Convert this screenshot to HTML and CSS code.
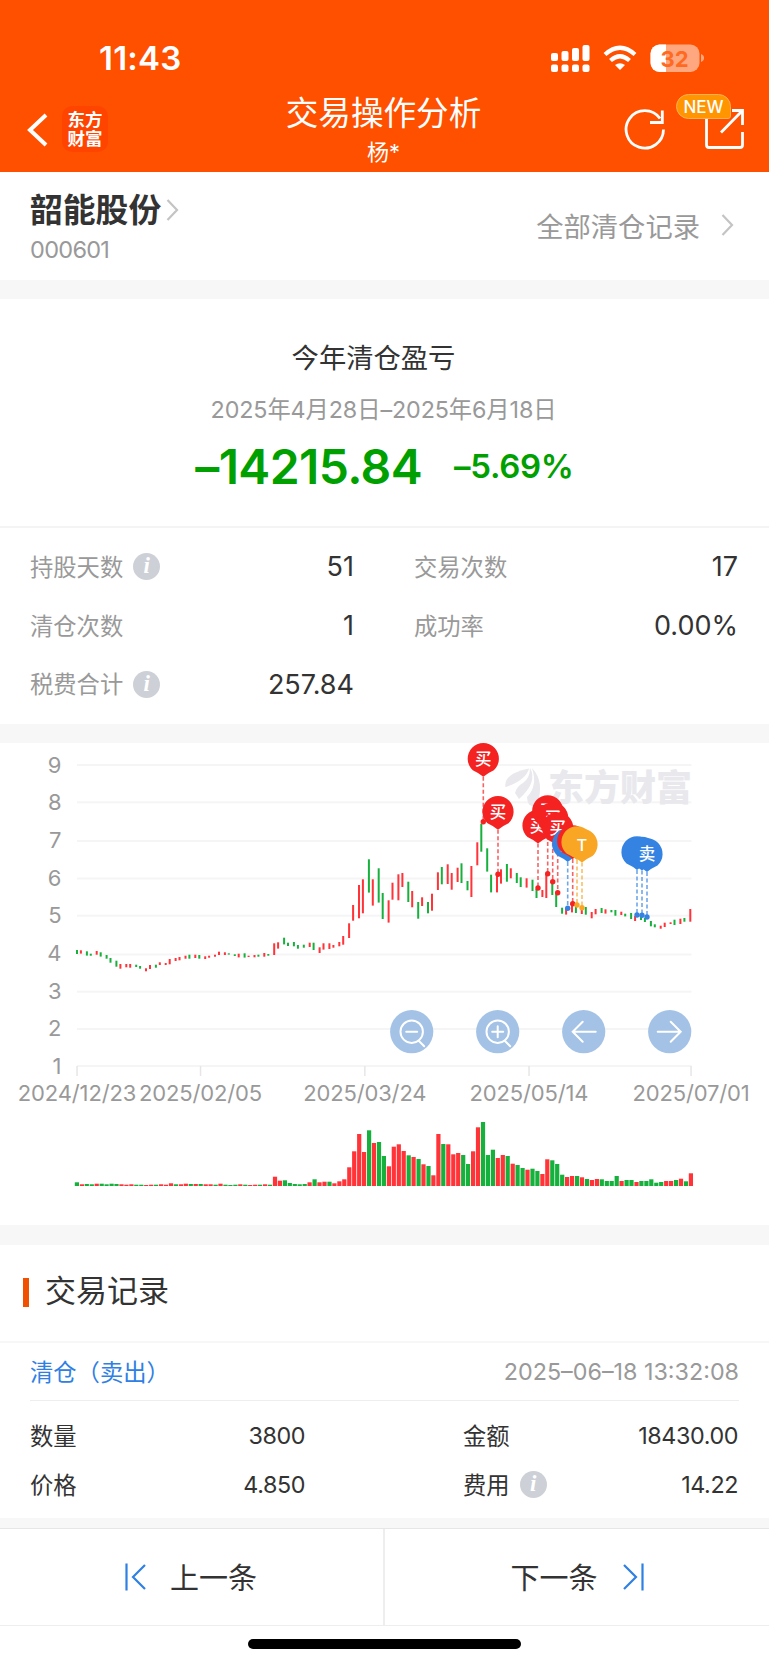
FILE: index.html
```html
<!DOCTYPE html>
<html lang="zh-CN">
<head>
  <meta charset="utf-8">
  <title>交易操作分析</title>
  <link rel="stylesheet" href="styles.css">
</head>
<body>
  <header class="header">
    <div class="status">
      <span class="time">11:43</span>
      <svg class="status-icons" width="156" height="30" viewBox="0 0 156 30">
        <g fill="#fff">
          <rect x="1" y="10" width="7" height="8" rx="2"/>
          <rect x="11.500" y="8" width="7" height="10" rx="2"/>
          <rect x="22" y="5" width="7" height="13" rx="2"/>
          <rect x="32.500" y="2" width="7" height="16" rx="2"/>
          <rect x="1" y="21.500" width="7" height="7.500" rx="2"/>
          <rect x="11.500" y="21.500" width="7" height="7.500" rx="2"/>
          <rect x="22" y="21.500" width="7" height="7.500" rx="2"/>
          <rect x="32.500" y="21.500" width="7" height="7.500" rx="2"/>
          <path d="M70 27 L65 22 Q70 18.500 75 22 Z"/>
        </g>
        <g fill="none" stroke="#fff" stroke-width="4.200">
          <path d="M55 11.500 Q70 -2 85 11.500"/>
          <path d="M60.500 17.500 Q70 9 79.500 17.500"/>
        </g>
        <rect x="100.500" y="1.500" width="49" height="27.500" rx="9" fill="#ffa880"/>
        <path d="M116 1.500 h-6.500 a9 9 0 0 0 -9 9 v9.500 a9 9 0 0 0 9 9 h6.500 Z" fill="#fff"/>
        <path d="M151 11 q3 1.200 3 4 t-3 4 Z" fill="#ffa880"/>
        <text class="battery" x="124.500" y="23.500">32</text>
      </svg>
    </div>
    <div class="nav">
      <div class="nav-side">
        <svg class="back" width="24" height="40" viewBox="0 0 24 40"><path d="M21 5 L5 20 L21 35" fill="none" stroke="#fff" stroke-width="4"/></svg>
        <div class="logo">东方<br>财富</div>
      </div>
      <div class="nav-title">
        <h1>交易操作分析</h1>
        <p>杨*</p>
      </div>
      <div class="nav-side right">
        <svg width="44" height="44" viewBox="0 0 44 44" fill="none" stroke="#fff" stroke-width="2.800">
          <path d="M40.500 22.500 A18.700 18.700 0 1 1 37 11.500"/>
          <path d="M39.300 3.500 V15.500 H27"/>
        </svg>
        <div class="share">
          <svg width="44" height="44" viewBox="0 0 44 44" fill="none" stroke="#fff" stroke-width="2.800">
            <path d="M3.500 12 V38 Q3.500 40.500 6 40.500 H37 Q39.500 40.500 39.500 38 V25"/>
            <path d="M29 3.500 H39.500 V18 M39.500 3.500 L18 25.500"/>
          </svg>
          <span class="badge">NEW</span>
        </div>
      </div>
    </div>
  </header>

  <section class="stock">
    <div>
      <div class="stock-name">韶能股份<svg width="13" height="24" viewBox="0 0 13 24"><path d="M1.500 2 L11 12 L1.500 22" fill="none" stroke="#c4c4c4" stroke-width="2.200"/></svg></div>
      <div class="stock-code">000601</div>
    </div>
    <div class="all-records">全部清仓记录<svg width="13" height="24" viewBox="0 0 13 24"><path d="M1.500 2 L11 12 L1.500 22" fill="none" stroke="#c4c4c4" stroke-width="2.200"/></svg></div>
  </section>

  <section class="summary">
    <h2>今年清仓盈亏</h2>
    <p class="period">2025年4月28日–2025年6月18日</p>
    <div class="profit"><span class="amount">–14215.84</span><span class="percent">–5.69%</span></div>
  </section>

  <section class="stats">
    <div class="stat"><span>持股天数<i class="info">i</i></span><b>51</b></div>
    <div class="stat"><span>交易次数</span><b>17</b></div>
    <div class="stat"><span>清仓次数</span><b>1</b></div>
    <div class="stat"><span>成功率</span><b>0.00%</b></div>
    <div class="stat"><span>税费合计<i class="info">i</i></span><b>257.84</b></div>
  </section>

  <section class="chart">
    <svg id="chart" width="769" height="482" viewBox="0 743 769 482"></svg>
  </section>

  <section class="records">
    <h3>交易记录</h3>
    <div class="record-head"><span>清仓（卖出）</span><time>2025–06–18 13:32:08</time></div>
    <div class="record-body">
      <div class="cell"><span>数量</span><b>3800</b></div>
      <div class="cell"><span>金额</span><b>18430.00</b></div>
      <div class="cell"><span>价格</span><b>4.850</b></div>
      <div class="cell"><span>费用<i class="info">i</i></span><b>14.22</b></div>
    </div>
  </section>

  <footer class="pager">
    <div class="page-btn prev">
      <svg width="22" height="28" viewBox="0 0 22 28" fill="none" stroke="#2f80e4" stroke-width="2.200"><path d="M1.500 0.500 V27.500 M20 2 L8 14 L20 26"/></svg>
      <span>上一条</span>
    </div>
    <div class="page-btn next">
      <span>下一条</span>
      <svg width="22" height="28" viewBox="0 0 22 28" fill="none" stroke="#2f80e4" stroke-width="2.200"><path d="M20.500 0.500 V27.500 M2 2 L14 14 L2 26"/></svg>
    </div>
  </footer>
  <div class="home"></div>
  <script src="chart.js"></script>
</body>
</html>
```
FILE: styles.css
```css
* {
  box-sizing: border-box;
}
body {
  margin: 0;
  width: 769px;
  height: 1665px;
  overflow: hidden;
  background: #fff;
  color: #333;
  font-family: Inter, "Noto Sans CJK SC", sans-serif;
  font-size: 23.3px;
}
h1, h2, h3, p {
  margin: 0;
  font-weight: 400;
}
b {
  font-weight: 400;
}
svg {
  display: block;
  flex: none;
}

/* header */
.header {
  height: 172px;
  background: #ff5000;
  color: #fff;
}
.status {
  height: 86px;
  padding: 29px 63px 0 99px;
  display: flex;
  justify-content: space-between;
  align-items: center;
}
.time {
  font-size: 33px;
  font-weight: 600;
  letter-spacing: 0.2px;
}
.battery {
  font-size: 22px;
  font-weight: 700;
  fill: #ff6a22;
  text-anchor: middle;
}
.nav {
  height: 86px;
  display: flex;
  justify-content: space-between;
}
.nav-side {
  width: 200px;
  padding: 20px 0 0 25px;
  display: flex;
  align-items: flex-start;
}
.nav-side.right {
  padding: 21px 22px 0 0;
  justify-content: flex-end;
  gap: 36px;
}
.back {
  margin-top: 4px;
}
.logo {
  width: 46px;
  height: 46px;
  margin-left: 13px;
  padding-top: 3px;
  border-radius: 10px;
  background: #ff4400;
  font-family: "Noto Sans CJK SC", sans-serif;
  font-size: 17.5px;
  font-weight: 700;
  line-height: 19px;
  text-align: center;
}
.nav-title {
  margin-right: 2px;
  text-align: center;
}
.nav-title h1 {
  font-size: 32.6px;
  line-height: 40px;
  margin-top: 7px;
}
.nav-title p {
  font-size: 22px;
  line-height: 30px;
  margin-top: 4px;
}
.share {
  position: relative;
}
.badge {
  position: absolute;
  left: -27px;
  top: -13px;
  width: 55px;
  height: 25px;
  border: 1px solid #ffb056;
  border-radius: 13px 13px 3px 13px;
  background: #ff9500;
  font-size: 17px;
  font-weight: 500;
  line-height: 24px;
  text-align: center;
}

/* stock name */
.stock {
  height: 127px;
  padding: 16px 35px 0 30px;
  border-bottom: 19px solid #f7f7f7;
  display: flex;
  justify-content: space-between;
}
.stock-name {
  display: flex;
  align-items: center;
  gap: 5px;
  font-size: 32.8px;
  font-weight: 600;
  line-height: 44px;
}
.stock-code {
  font-size: 23.5px;
  line-height: 36px;
  letter-spacing: -0.7px;
  color: #999;
}
.all-records {
  height: 74px;
  display: flex;
  align-items: center;
  gap: 21px;
  font-size: 27.3px;
  color: #999;
}

/* summary */
.summary {
  height: 229px;
  padding-top: 40px;
  border-bottom: 2px solid #f4f4f4;
  text-align: center;
}
.summary h2 {
  font-size: 27.3px;
  line-height: 40px;
  margin-left: -22px;
}
.period {
  margin: 14px 2px 0 0;
  line-height: 34px;
  letter-spacing: -0.1px;
  color: #999;
}
.profit {
  height: 70px;
  padding-top: 8px;
  display: flex;
  justify-content: center;
  align-items: center;
  gap: 32px;
  color: #00a000;
}
.amount {
  font-size: 48px;
  font-weight: 600;
  letter-spacing: -0.6px;
}
.percent {
  font-size: 33px;
  font-weight: 600;
  letter-spacing: -0.3px;
}

/* stats */
.stats {
  height: 215px;
  padding: 9.5px 31px 0 30px;
  border-bottom: 19px solid #f7f7f7;
  display: grid;
  grid-template-columns: 324px 324px;
  grid-auto-rows: 58.7px;
  column-gap: 60px;
}
.stat {
  display: flex;
  justify-content: space-between;
  align-items: center;
}
.stat span, .cell span {
  display: flex;
  align-items: center;
  margin-top: -2px;
}
.stat span {
  color: #999;
}
.stat b {
  font-size: 27px;
}
.info {
  width: 27px;
  height: 27px;
  margin: 2px 0 0 10px;
  border-radius: 50%;
  background: #cdd0d6;
  color: #fff;
  font: italic bold 23px/26px "Liberation Serif", serif;
  text-align: center;
}

/* chart */
.chart {
  height: 502px;
  border-bottom: 20px solid #f7f7f7;
}
.axis {
  font-size: 22px;
  fill: #999;
}
.dates {
  letter-spacing: -0.15px;
  text-anchor: middle;
}
.watermark {
  font-family: "Noto Sans CJK SC", sans-serif;
  font-size: 36px;
  font-weight: 900;
  fill: #e8e8ed;
}
.pin-text {
  font-size: 16.5px;
  font-weight: 500;
  fill: #fff;
  text-anchor: middle;
}

/* records */
.records {
  height: 283px;
  border-bottom: 10px solid #f7f7f7;
}
.records h3 {
  height: 98px;
  padding: 0 0 4px 23px;
  border-bottom: 2px solid #f7f7f7;
  display: flex;
  align-items: center;
  font-size: 31px;
  line-height: 40px;
}
.records h3::before {
  content: "";
  width: 6px;
  height: 29px;
  margin: 2px 16px 0 0;
  background: #f05000;
}
.record-head {
  height: 58px;
  margin: 0 30px;
  border-bottom: 1px solid #eee;
  display: flex;
  justify-content: space-between;
  align-items: center;
  color: #2f80e4;
}
.record-head span {
  margin-top: -2px;
}
.record-head time {
  color: #999;
}
.record-body {
  padding: 10px 31px 0 30px;
  display: grid;
  grid-template-columns: 275px 275px;
  grid-auto-rows: 49px;
  column-gap: 158px;
}
.cell {
  display: flex;
  justify-content: space-between;
  align-items: center;
}
.cell b {
  letter-spacing: -0.4px;
}

/* bottom buttons */
.pager {
  height: 98px;
  border-top: 1px solid #e6e6e6;
  border-bottom: 1px solid #eee;
  display: flex;
}
.page-btn {
  width: 385px;
  display: flex;
  align-items: center;
  font-size: 29px;
}
.page-btn span {
  margin-top: -3px;
}
.prev {
  padding-left: 125px;
  gap: 23px;
  border-right: 2px solid #eee;
}
.next {
  padding-left: 126px;
  gap: 24px;
}
.home {
  width: 273px;
  height: 10px;
  margin: 13px 0 0 248px;
  border-radius: 5px;
  background: #000;
}
```
FILE: chart.js
```js
// heights are kept in thirds of a pixel
var TOP = 735;
var RED = '#ff3338', GREEN = '#16b13c';
var svg = document.getElementById('chart');
var out = '';

// colour, high, low
var candles = 'g645-657 r646-656 g649-662 g656-662 r648-659 g652-665 g660-671 g669-683 g677-695 r687-701 r687-697 r687-698 g689-696 g693-701 r700-709 r690-702 g689-698 r682-690 r684-690 r672-688 r669-678 r666-676 r662-671 g659-671 r659-669 g660-671 r664-672 r662-668 r659-665 r650-660 r652-660 g655-659 g658-663 r656-667 g655-668 r662-666 r660-667 g659-665 r654-665 g657-662 r625-660 r622-641 g608-628 g623-633 g621-634 g630-641 g629-638 r623-636 g623-645 r637-654 r625-644 r625-642 r630-638 r621-634 r603-629 r565-609 r510-557 r450-550 r433-535 g373-473 r433-512 g400-503 g474-552 r496-563 r443-494 r418-496 r414-456 g440-501 r468-517 g501-551 r487-513 g501-535 r476-527 r412-465 g396-448 r388-447 r414-464 r398-441 g385-444 g438-466 r393-486 r322-391 g266-350 g340-410 g419-472 r419-472 r403-446 g387-440 r400-430 g414-444 g427-456 r430-458 g434-468 g462-489 r465-486 r418-489 g442-480 g472-516 g518-536 r520-539 r506-532 g513-534 r518-537 g516-539 r531-550 r522-538 g519-534 r523-536 g525-532 g525-542 r530-540 g536-544 g534-552 r543-558 g541-555 g549-561 g558-574 g568-577 r572-581 r563-576 r562-567 g554-570 r551-567 g549-560 r522-560'.split(' ');

var volumes = 'g11 r5 g6 g5 r7 g7 g5 g7 g6 r5 r4 r5 g4 g4 r3 r4 g4 r5 r4 r8 g5 r5 r7 g6 r6 g6 r5 r5 g4 r7 g4 g3 g4 r5 g4 r3 r4 g4 r5 g4 r28 r16 g17 g9 g6 g5 g6 r11 g20 r11 r13 g13 r8 r14 r20 r56 r104 r156 r102 g167 r129 g132 g90 r59 r118 r125 r105 g92 r87 g81 r65 g60 r32 r156 g126 r125 r95 r99 g93 g66 r104 r176 g192 g93 g109 r84 r93 g90 r67 g63 g54 r49 g52 g45 r36 r80 g77 g66 g34 r27 r30 g30 r26 g21 r18 r21 g20 g15 g15 g30 r15 g18 g18 r12 g15 g15 g20 g10 g12 r15 r15 g18 r22 g14 r38'.split(' ');

function color(s) {
  return s[0] == 'r' ? RED : GREEN;
}

// grid and axes
var gridY = [765, 802.3, 841, 878.5, 915.7, 954.5, 991.7, 1029, 1066];
gridY.forEach(function(y, i) {
  out += '<rect x="77" y="' + (y - 1) + '" width="614.500" height="2" fill="#f5f5f5"/>';
  out += '<text class="axis" x="61.500" y="' + (765 + i * 37.7 + 7.5) + '" text-anchor="end">' + (9 - i) + '</text>';
});
[[77, '2024/12/23'], [200.500, '2025/02/05'], [364.800, '2025/03/24'], [529, '2025/05/14'], [691, '2025/07/01']].forEach(function(d) {
  out += '<rect x="' + (d[0] - 0.7) + '" y="1066" width="1.500" height="10" fill="#e6e6e6"/>';
  out += '<text class="axis dates" x="' + d[0] + '" y="1101">' + d[1] + '</text>';
});

// watermark
out += '<g fill="#e8e8ed"><path d="M505.500 787 Q503 774 529 768.500 Q526 780 506 787 Z"/>' +
  '<path d="M515 793 Q517 786 523 783 Q530 778 530 768 Q538 782 519 799 Z"/>' +
  '<path d="M532 768 Q545 782 537 804 Q528 810 527 797 Q538 786 532 768 Z"/></g>';
out += '<text class="watermark" x="548" y="801">东方财富</text>';

candles.forEach(function(c, i) {
  var v = c.slice(1).split('-');
  var x = 76 + 1.972 * Math.floor(i * 2.511);
  out += '<rect x="' + x.toFixed(1) + '" y="' + (TOP + v[0] / 3).toFixed(1) + '" width="2" height="' + ((v[1] - v[0]) / 3).toFixed(1) + '" fill="' + color(c) + '"/>';
});
volumes.forEach(function(c, i) {
  var h = c.slice(1) / 3;
  out += '<rect x="' + (74.8 + i * 4.952).toFixed(1) + '" y="' + (1186 - h).toFixed(1) + '" width="4.200" height="' + h.toFixed(1) + '" fill="' + color(c) + '"/>';
});

// trade pins: x, centre y, dot y, colour, label
var pins = [
  [483.3, 758.7, 821.7, '#f52222', '买'],
  [498, 811.7, 874.3, '#f52222', '买'],
  [538, 825.5, 888, '#f52222', '买'],
  [547.7, 811, 873.7, '#f52222', '买'],
  [552.7, 818, 881.7, '#f52222', '买'],
  [557.7, 828, 892.7, '#f52222', '买'],
  [567.7, 844, 908.3, '#3483e3', '卖'],
  [572.7, 841, 903.7, '#f52222', ''],
  [577, 842, 905, '#f8a623', ''],
  [582, 844.5, 907.7, '#f8a623', 'T'],
  [637, 852, 915, '#3483e3', ''],
  [642, 852.5, 915.3, '#3483e3', ''],
  [647, 854, 917, '#3483e3', '卖']
];
pins.forEach(function(p) {
  out += '<path d="M' + p[0] + ' ' + (p[1] + 18) + ' V' + p[2] + '" stroke="' + p[3] + '" stroke-width="1.600" stroke-dasharray="4 2.500" opacity="0.700"/>';
  out += '<circle cx="' + p[0] + '" cy="' + p[2] + '" r="2.700" fill="' + p[3] + '"/>';
});
pins.forEach(function(p) {
  out += '<g transform="translate(' + p[0] + ' ' + p[1] + ')"><path d="M-10.500 11.500 A15.600 15.600 0 1 1 10.500 11.500 Q4 14.500 0 18 Q-4 14.500 -10.500 11.500 Z" fill="' + p[3] + '"/>' +
    (p[4] ? '<text class="pin-text" y="6">' + p[4] + '</text>' : '') + '</g>';
});

// zoom and scroll buttons
var icons = [
  '<circle r="11.200"/><path d="M-5.500 0 H5.500 M7 9 L12.500 14.500"/>',
  '<circle r="11.200"/><path d="M-5.500 0 H5.500 M0 -5.500 V5.500 M7 9 L12.500 14.500"/>',
  '<path d="M12 0 H-11 M-1 -10 L-11 0 L-1 10"/>',
  '<path d="M-12 0 H11 M1 -10 L11 0 L1 10"/>'
];
icons.forEach(function(icon, i) {
  out += '<g transform="translate(' + (411.7 + i * 86) + ' 1031.700)"><circle r="21.600" fill="#9bbde3" fill-opacity="0.920"/>' +
    '<g fill="none" stroke="#fff" stroke-width="2" stroke-linecap="round">' + icon + '</g></g>';
});

svg.innerHTML = out;
```
